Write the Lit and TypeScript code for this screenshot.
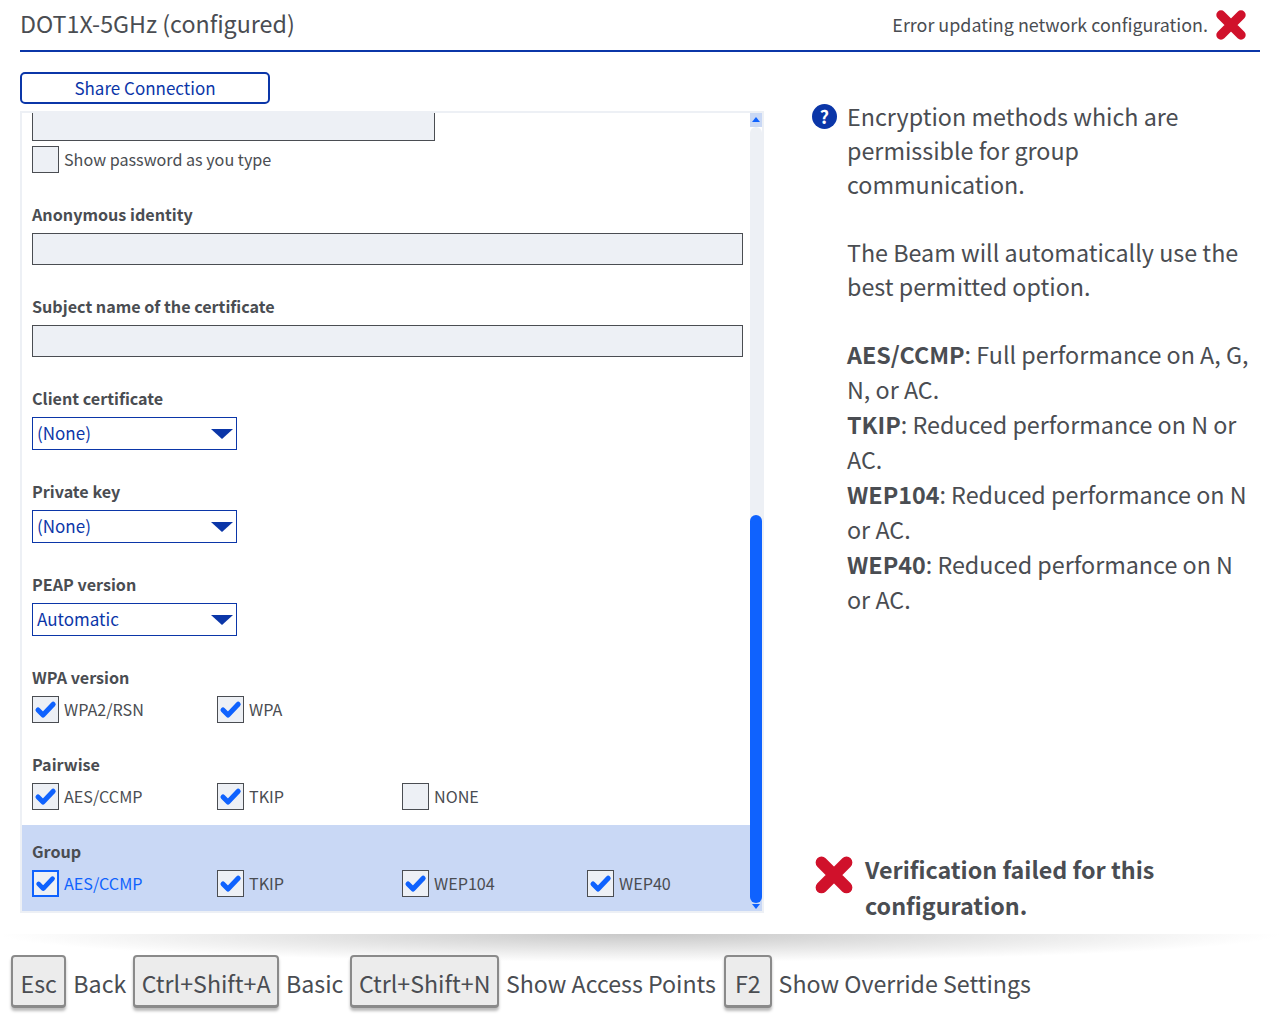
import { LitElement, html, css, svg } from "lit";
import { customElement } from "lit/decorators.js";

const cross = (size: number) => html`<svg class="cross" width=${size} height=${size} viewBox="0 0 32 32"><path d="M6 6L26 26M26 6L6 26" fill="none" stroke="#d0112b" stroke-width="9.4" stroke-linecap="round"/></svg>`;

@customElement("app-root")
export class AppRoot extends LitElement {
  static styles = css`
    :host { display: block; width: 1280px; height: 1024px; overflow: hidden; background: #fff; color: #4a4d52;
      font-family: "Noto Sans CJK SC", "Noto Sans", sans-serif; font-size: 18px; }
    .header { display: flex; justify-content: space-between; margin: 0 20px; height: 50px; border-bottom: 2px solid #0b36a8; box-sizing: content-box; }
    .title { font-size: 23.25px; line-height: 47px; }
    .status { display: flex; align-items: center; gap: 7px; font-size: 17.9px; height: 50px; padding-right: 13px; }
    .status span { margin-top: -3px; }
    .share { display: block; box-sizing: border-box; width: 250px; height: 32px; margin: 20px 0 7px 20px; border: 2px solid #0b36a8; border-radius: 5px; background: #fff; color: #0b36a8; font: inherit; font-size: 17px; line-height: 24px; padding: 0; text-align: center; }
    .main { display: flex; height: 802px; }
    .panel { position: relative; flex: none; box-sizing: border-box; width: 744px; height: 802px; margin-left: 20px; border: 2px solid #edf0f5; display: flex; flex-direction: column; justify-content: flex-end; overflow: hidden; }
    .group { padding: 0 10px; box-sizing: border-box; flex: none; }
    .field { padding-top: 30px; }
    .pw { padding-top: 5px; }
    .opts { padding-top: 30px; }
    .label { font-weight: 700; font-size: 16.15px; line-height: 22px; height: 24px; margin-bottom: 6px; }
    .input { box-sizing: border-box; height: 32px; width: 711px; background: #edf0f5; border: 1px solid #4a4d52; }
    .input.short { width: 403px; height: 60px; }
    .select { box-sizing: border-box; width: 205px; height: 33px; border: 1px solid #0b36a8; color: #0b36a8; display: flex; align-items: center; justify-content: space-between; padding: 0 3px 0 4px; font-size: 17px; }
    .select span { margin-top: -3px; }
    .tri { width: 0; height: 0; border-left: 11px solid transparent; border-right: 11px solid transparent; border-top: 10px solid #0b36a8; margin-top: 1px; }
    .checks { display: flex; }
    .check { display: flex; align-items: center; gap: 5px; width: 185px; height: 27px; font-size: 16.15px; white-space: nowrap; flex: none; }
    .check span { margin-top: -2px; }
    .box { box-sizing: border-box; width: 27px; height: 27px; background: #edf0f5; border: 1px solid #4a4d52; flex: none; display: flex; align-items: center; justify-content: center; }
    .focus { color: #0f62fe; }
    .focus .box { border: 2px solid #0f62fe; }
    .hl { background: #c9d8f5; padding-top: 15px; padding-bottom: 14px; margin-top: 15px; }
    .track { position: absolute; right: 0; top: 0; bottom: 0; width: 12px; }
    .btn { position: absolute; left: 0; top: 0; width: 12px; height: 14px; background: #c9d8f5; }
    .rail { position: absolute; left: 0; top: 14px; width: 12px; height: 400px; border-radius: 6px; background: #edf0f5; }
    .thumb { position: absolute; left: 0; top: 402px; width: 12px; height: 388px; border-radius: 6px; background: #0f62fe; }
    .up, .down { position: absolute; left: 1.5px; width: 0; height: 0; border-left: 4.5px solid transparent; border-right: 4.5px solid transparent; }
    .up { top: 4px; border-bottom: 5px solid #0f62fe; }
    .down { bottom: 2px; border-top: 5px solid #0f62fe; }
    .help { flex: none; width: 440px; margin-left: 48px; display: flex; flex-direction: column; justify-content: space-between; height: 824px; margin-top: -12px; box-sizing: border-box; }
    .topic { display: flex; gap: 10px; font-size: 23.3px; line-height: 34px; }
    .q { flex: none; width: 25px; height: 25px; border-radius: 50%; background: #0b36a8; color: #fff; font-weight: 700; font-size: 18px; line-height: 25px; text-align: center; margin-top: 5px; }
    .copy { width: 404px; }
    .copy p { margin: 0 0 34px; }
    .copy .methods { line-height: 35px; margin: 0; }
    .verify { display: flex; gap: 11px; align-items: flex-start; font-size: 23.3px; font-weight: 700; line-height: 36px; margin-left: 2px; }
    .verify .cross { margin-top: 4px; }
    .verify span { width: 340px; }
    .foot { display: flex; align-items: flex-start; gap: 7px; height: 90px; margin-top: 21px; padding: 21px 0 0 11px; box-sizing: border-box; font-size: 23.2px; position: relative; }
    .foot::before { content: ""; position: absolute; left: 0; right: 0; top: 0; height: 28px; background: radial-gradient(ellipse 640px 28px at 50% 0, #c8c8c8, #fff); }
    .key { box-sizing: border-box; position: relative; height: 53px; line-height: 52px; padding: 0 6.5px; background: #ececec; border: 2px solid #8a8a8a; border-bottom-width: 3px; border-radius: 4px; box-shadow: 0 3px 3px #bbb; }
    .key.esc { padding: 0 7.5px; }
    .key.f2 { padding: 0 9px; margin-left: 1px; }
    .lbl { position: relative; line-height: 56px; }
  `;

  private chk(label: string, on = true, focus = false) {
    return html`<div class="check ${focus ? "focus" : ""}"><div class="box">${on ? html`<svg width="25" height="25" viewBox="0 0 25 25">${svg`<path d="M5 13L10 18L20.2 7.2" fill="none" stroke="#0f62fe" stroke-width="5" stroke-linecap="round" stroke-linejoin="round"/>`}</svg>` : ""}</div><span>${label}</span></div>`;
  }
  private select(label: string, value: string) {
    return html`<div class="group field"><div class="label">${label}</div><div class="select"><span>${value}</span><div class="tri"></div></div></div>`;
  }
  private text(label: string) {
    return html`<div class="group field"><div class="label">${label}</div><div class="input"></div></div>`;
  }
  private checks(label: string, items: unknown, hl = false) {
    return html`<div class="group ${hl ? "hl" : "opts"}"><div class="label">${label}</div><div class="checks">${items}</div></div>`;
  }

  render() {
    return html`
      <div class="header"><div class="title">DOT1X-5GHz (configured)</div><div class="status"><span>Error updating network configuration.</span>${cross(32)}</div></div>
      <button class="share">Share Connection</button>
      <div class="main">
        <div class="panel">
          <div class="group"><div class="input short"></div></div>
          <div class="group pw"><div class="checks">${this.chk("Show password as you type", false)}</div></div>
          ${this.text("Anonymous identity")}
          ${this.text("Subject name of the certificate")}
          ${this.select("Client certificate", "(None)")}
          ${this.select("Private key", "(None)")}
          ${this.select("PEAP version", "Automatic")}
          ${this.checks("WPA version", html`${this.chk("WPA2/RSN")}${this.chk("WPA")}`)}
          ${this.checks("Pairwise", html`${this.chk("AES/CCMP")}${this.chk("TKIP")}${this.chk("NONE", false)}`)}
          ${this.checks("Group", html`${this.chk("AES/CCMP", true, true)}${this.chk("TKIP")}${this.chk("WEP104")}${this.chk("WEP40")}`, true)}
          <div class="track"><div class="btn"></div><div class="rail"></div><div class="up"></div><div class="thumb"></div><div class="down"></div></div>
        </div>
        <div class="help">
          <div class="topic"><div class="q">?</div><div class="copy">
            <p>Encryption methods which are permissible for group communication.</p>
            <p>The Beam will automatically use the best permitted option.</p>
            <p class="methods"><b>AES/CCMP</b>: Full performance on A, G, N, or AC.<br><b>TKIP</b>: Reduced performance on N or AC.<br><b>WEP104</b>: Reduced performance on N or AC.<br><b>WEP40</b>: Reduced performance on N or AC.</p>
          </div></div>
          <div class="verify">${cross(40)}<span>Verification failed for this configuration.</span></div>
        </div>
      </div>
      <div class="foot">
        <div class="key esc">Esc</div><div class="lbl">Back</div>
        <div class="key">Ctrl+Shift+A</div><div class="lbl">Basic</div>
        <div class="key">Ctrl+Shift+N</div><div class="lbl">Show Access Points</div>
        <div class="key f2">F2</div><div class="lbl">Show Override Settings</div>
      </div>
    `;
  }
}
